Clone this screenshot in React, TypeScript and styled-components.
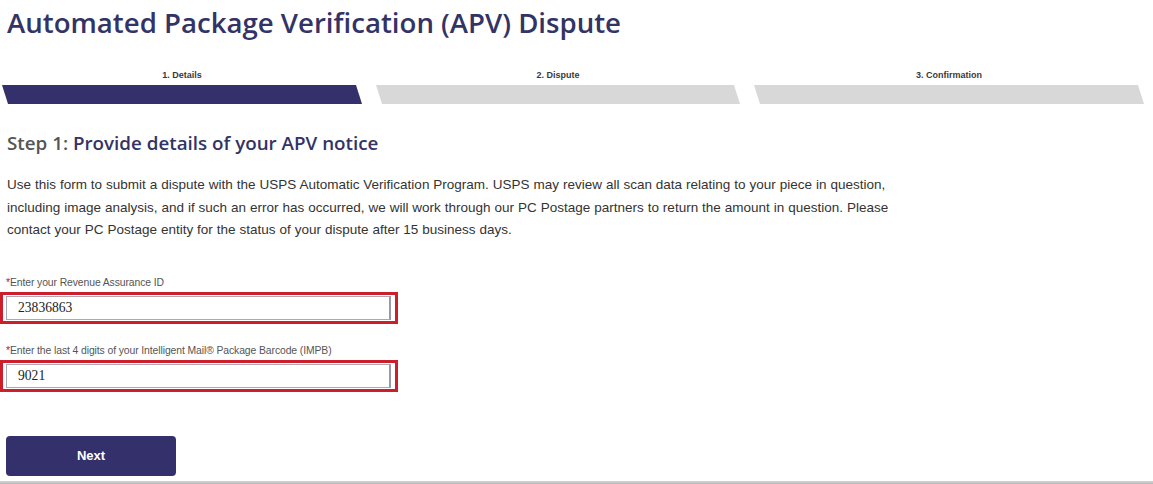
import React from "react";
import styled, { createGlobalStyle } from "styled-components";

const Global = createGlobalStyle`
  html, body { margin: 0; padding: 0; background: #fff; }
  body { width: 1153px; height: 484px; overflow: hidden; }
`;

const Page = styled.div`
  position: relative;
  width: 1153px;
  height: 484px;
  box-sizing: border-box;
  display: flex;
  flex-direction: column;
  font-family: "Liberation Sans", Arial, sans-serif;
`;

const Title = styled.h1`
  margin: 0;
  padding: 3px 0 0 7px;
  height: 52px;
  box-sizing: border-box;
  font-family: "Open Sans", sans-serif;
  font-weight: 600;
  font-size: 27.6px;
  line-height: 38px;
  color: #333366;
`;

const Steps = styled.div`
  display: flex;
  gap: 14px;
  padding: 0 8px 0 2px;
  margin-top: 17px;
`;

const Step = styled.div<{ $w: number }>`
  width: ${(p) => p.$w}px;
  display: flex;
  flex-direction: column;
  align-items: center;
`;

const StepLabel = styled.div`
  font-family: "Liberation Sans", Arial, sans-serif;
  font-weight: bold;
  font-size: 9px;
  line-height: 12px;
  color: #3a3a3a;
  height: 16px;
`;

const Bar = styled.div<{ $active: boolean }>`
  width: 100%;
  height: 19px;
  background: ${(p) => (p.$active ? "#34306b" : "#d8d8d8")};
  clip-path: polygon(0 0, calc(100% - 6px) 0, 100% 100%, 6px 100%);
`;

const StepHeading = styled.h2`
  margin: 26px 0 0 7px;
  font-family: "Open Sans", sans-serif;
  font-weight: 600;
  font-size: 18.8px;
  line-height: 26px;
  color: #333366;
`;

const Muted = styled.span`
  color: #555;
`;

const Intro = styled.p`
  margin: 18px 0 0 7px;
  width: 910px;
  font-size: 13.5px;
  line-height: 22.5px;
  color: #333;
  word-spacing: 0.2px;
`;

const Field = styled.div<{ $top: number }>`
  display: flex;
  flex-direction: column;
  margin-top: ${(p) => p.$top}px;
`;

const Label = styled.label`
  font-size: 10.4px;
  line-height: 12px;
  color: #555;
  padding-left: 6px;
  margin-bottom: 3px;
  letter-spacing: -0.1px;
`;

const Req = styled.span`
  color: #d0021b;
`;

const Highlight = styled.div`
  width: 398px;
  height: 32px;
  box-sizing: border-box;
  border: 3px solid #cc1f2b;
  padding: 1px 4px 1px 3px;
  display: flex;
`;

const Input = styled.input`
  flex: 1;
  box-sizing: border-box;
  border: 1px solid #a9a9b8;
  border-right: 2px solid #9a98ad;
  outline: none;
  padding: 0 0 0 11px;
  font-family: "Liberation Serif", "Times New Roman", serif;
  font-size: 13.6px;
  color: #222;
  background: #fff;
`;

const Button = styled.button`
  margin: 44px 0 0 6px;
  width: 170px;
  height: 40px;
  background: #34306b;
  color: #fff;
  border: none;
  border-radius: 4px;
  font-family: "Liberation Sans", Arial, sans-serif;
  font-weight: bold;
  font-size: 13px;
  cursor: pointer;
`;

const BottomRule = styled.div`
  position: absolute;
  left: 0;
  right: 0;
  bottom: 0;
  height: 3px;
  background: linear-gradient(#d6d6d6, #b8b8b8);
`;

const steps = [
  { label: "1. Details", w: 360, active: true },
  { label: "2. Dispute", w: 364, active: false },
  { label: "3. Confirmation", w: 390, active: false },
];

export default function App() {
  return (
    <Page>
      <Global />
      <Title>Automated Package Verification (APV) Dispute</Title>
      <Steps>
        {steps.map((s) => (
          <Step key={s.label} $w={s.w}>
            <StepLabel>{s.label}</StepLabel>
            <Bar $active={s.active} />
          </Step>
        ))}
      </Steps>
      <StepHeading>
        <Muted>Step 1:</Muted> Provide details of your APV notice
      </StepHeading>
      <Intro>
        Use this form to submit a dispute with the USPS Automatic Verification Program. USPS may review all scan data
        relating to your piece in question, including image analysis, and if such an error has occurred, we will work
        through our PC Postage partners to return the amount in question. Please contact your PC Postage entity for the
        status of your dispute after 15 business days.
      </Intro>
      <Field $top={35}>
        <Label>
          <Req>*</Req>Enter your Revenue Assurance ID
        </Label>
        <Highlight>
          <Input defaultValue="23836863" />
        </Highlight>
      </Field>
      <Field $top={21}>
        <Label>
          <Req>*</Req>Enter the last 4 digits of your Intelligent Mail® Package Barcode (IMPB)
        </Label>
        <Highlight>
          <Input defaultValue="9021" />
        </Highlight>
      </Field>
      <Button>Next</Button>
      <BottomRule />
    </Page>
  );
}
